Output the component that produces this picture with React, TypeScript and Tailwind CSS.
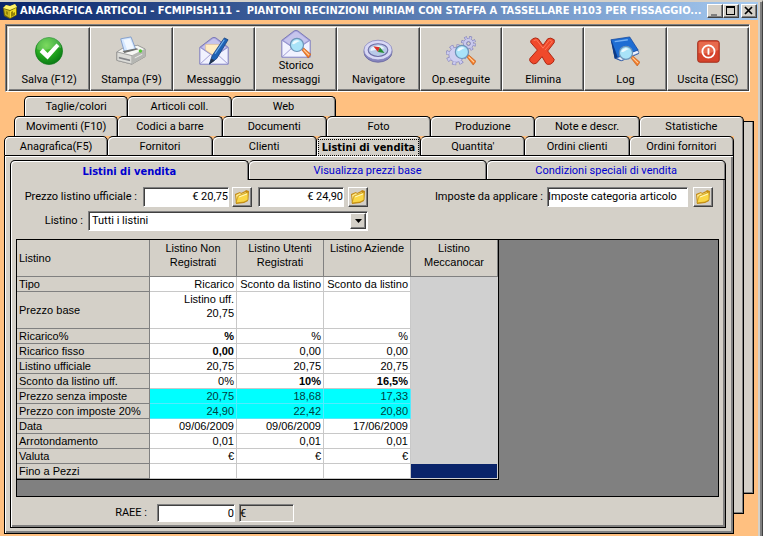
import React from 'react';

type IconProps = { className?: string };

const CubeIcon: React.FC<IconProps> = ({ className }) => (
    <svg viewBox="0 0 16 16" className={className} aria-hidden="true">
        <path d="M1 5 4 2l4 1 5-2 2 3v8l-7 4-6-3z" fill="#6f6408" />
        <path d="m1 5 7 2 7-3-2-3-5 2-4-1z" fill="#fff36a" />
        <path d="m2 6 6 2v7l-5-3z" fill="#c6b31c" />
        <path d="m8 8 6-3v7l-6 3z" fill="#f2de24" />
        <path d="m4 8 2 1v3l-2-1zM9 9l2-1v2l2-1v3l-4 2z" fill="#938407" />
    </svg>
);

const CheckIcon: React.FC<IconProps> = ({ className }) => (
    <svg viewBox="0 0 32 32" className={className} aria-hidden="true">
        <defs>
            <radialGradient id="checkFill" cx="40%" cy="30%" r="75%">
                <stop offset="0" stopColor="#5fd23c" />
                <stop offset="0.6" stopColor="#1fa01d" />
                <stop offset="1" stopColor="#087414" />
            </radialGradient>
        </defs>
        <circle cx="16" cy="16" r="14.500" fill="url(#checkFill)" stroke="#0c7a17" strokeWidth="0.7" />
        <path d="M3 14a13 13 0 0 1 26-1C22 10 12 18 3 14z" fill="#fff" opacity="0.18" />
        <path d="m6 17 3.500-4 5 5 9.500-10 3 3-12.500 14z" fill="#fff" />
    </svg>
);

const PrinterIcon: React.FC<IconProps> = ({ className }) => (
    <svg viewBox="0 0 32 32" className={className} aria-hidden="true">
        <path d="m1 17 8-5 14-2 8 4v8l-14 8-16-4z" fill="#c3c4c0" stroke="#777" strokeWidth="0.8" />
        <path d="m1 17 8-5 14-2 8 4-14 7z" fill="#f7f7f4" stroke="#999" strokeWidth="0.6" />
        <path d="m1 17 16 4v9L1 26z" fill="#dcdcd8" stroke="#888" strokeWidth="0.6" />
        <path d="m17 21 14-7v8l-14 8z" fill="#b5b6b2" />
        <path d="M5 3 16 1l5 13-12 3z" fill="#d4e7ff" stroke="#6f8fc4" strokeWidth="0.8" />
        <path d="m8 4 7-1 4 10-7 2z" fill="#f2f8ff" />
        <path d="m7 16 15-3 2 1-15 4z" fill="#6f706e" />
        <path d="m3 22 12 3v2L3 24z" fill="#85868a" />
        <circle cx="26" cy="16" r="1.800" fill="#54c936" />
        <path d="m20 23 8-4v1l-8 4z" fill="#e9e9e7" />
    </svg>
);

const EnvelopeShape = () => (
    <g>
        <path d="M1 12 14 2q2-1 4 0l13 10v18H1z" fill="#a5a2dd" stroke="#7775b4" strokeWidth="1" />
        <path d="m3 12 12-9h2l12 9-13 9z" fill="#c6c4ec" />
        <path d="M1 12 16 22 31 12v18H1z" fill="#f1f2ff" stroke="#8a88c6" strokeWidth="0.9" />
        <path d="m1 30 12-11M31 30 19 19" stroke="#9c9ad2" strokeWidth="1" fill="none" />
    </g>
);

const LensShape = () => (
    <g>
        <path d="m22 22 2-2 8 7-3 4z" fill="#f47b28" stroke="#b85412" strokeWidth="0.6" />
        <path d="m24 22 6 6" stroke="#ffd2a0" strokeWidth="1.200" />
        <circle cx="17" cy="17" r="7" fill="#a9e3f8" stroke="#6d94b8" strokeWidth="1.300" />
        <path d="M12 16a5 5 0 0 1 8-3c-3 0-5 4-8 3z" fill="#fff" opacity="0.8" />
    </g>
);

const MessageIcon: React.FC<IconProps> = ({ className }) => (
    <svg viewBox="0 0 32 32" className={className} aria-hidden="true">
        <EnvelopeShape />
        <path d="M7 9h17v7l-8 5-9-6z" fill="#ffecc3" stroke="#e0bd83" strokeWidth="0.6" />
        <path d="m11 30 3-9L27 2l4 2-12 20z" fill="#1d62b5" stroke="#123d7c" strokeWidth="0.8" />
        <path d="m17 19 10-15" stroke="#79b4ee" strokeWidth="1.200" />
        <path d="m11 30 2-6 4 2z" fill="#26344c" />
    </svg>
);

const HistoryIcon: React.FC<IconProps> = ({ className }) => (
    <svg viewBox="0 0 32 32" className={className} aria-hidden="true">
        <EnvelopeShape />
        <LensShape />
    </svg>
);

const CompassIcon: React.FC<IconProps> = ({ className }) => (
    <svg viewBox="0 0 32 32" className={className} aria-hidden="true">
        <ellipse cx="16" cy="17" rx="15" ry="11" fill="#8584bd" stroke="#65649d" strokeWidth="0.8" />
        <ellipse cx="16" cy="15" rx="15" ry="10.500" fill="#d8d8f5" stroke="#8483bb" strokeWidth="0.8" />
        <ellipse cx="16" cy="15" rx="10.500" ry="6.800" fill="#b8c9e8" stroke="#6c6ba4" strokeWidth="1.200" />
        <path d="M8 16a8 5 0 0 1 15-3z" fill="#eaf4fd" />
        <path d="m11 11 7 1-2 5z" fill="#dd3228" />
        <path d="m23 18-5-6-2 5z" fill="#248b34" />
    </svg>
);

const GearsIcon: React.FC<IconProps> = ({ className }) => (
    <svg viewBox="0 0 32 32" className={className} aria-hidden="true">
        <circle cx="24" cy="8" r="6" fill="none" stroke="#8281bb" strokeWidth="4" strokeDasharray="2.600 2.110" />
        <circle cx="24" cy="8" r="5.500" fill="#c9c9ec" stroke="#8584be" strokeWidth="0.8" />
        <circle cx="24" cy="8" r="6" fill="none" stroke="#c4c4ea" strokeWidth="2.800" strokeDasharray="1.600 3.110" strokeDashoffset="-0.500" />
        <circle cx="24" cy="8" r="2" fill="#d4d0c8" stroke="#6f6eaa" strokeWidth="0.9" />
        <circle cx="11" cy="20" r="9" fill="none" stroke="#8281bb" strokeWidth="4.400" strokeDasharray="4 3.070" />
        <circle cx="11" cy="20" r="8" fill="#cfcff0" stroke="#8584be" strokeWidth="0.8" />
        <circle cx="11" cy="20" r="9" fill="none" stroke="#cbcbee" strokeWidth="3.200" strokeDasharray="2.800 4.270" strokeDashoffset="-0.600" />
        <LensShape />
    </svg>
);

const DeleteIcon: React.FC<IconProps> = ({ className }) => (
    <svg viewBox="0 0 32 32" className={className} aria-hidden="true">
        <path
            d="M5 3q3-2 6 0l5 7 5-7q3-2 7 1v3l-7 9 7 9q0 3-4 5-4 1-5-1l-4-7-6 7q-3 2-6-1-2-2-1-4l8-9-7-8q-1-2 2-4z"
            fill="#f0492b"
            stroke="#aa2410"
            strokeWidth="1"
        />
        <path d="m6 5 3-1 7 9 7-9 3 2-8 9" fill="none" stroke="#ff7a5c" strokeWidth="1" />
    </svg>
);

const LogIcon: React.FC<IconProps> = ({ className }) => (
    <svg viewBox="0 0 32 32" className={className} aria-hidden="true">
        <path d="m1 5 4 19 7 3 19-8-1-4z" fill="#12459c" />
        <path d="m6 23 23-8 2 3-19 8z" fill="#eff4ff" stroke="#5975ae" strokeWidth="0.6" />
        <path d="M1 4 21 1l9 14-22 8z" fill="#1e6dd3" stroke="#12459c" strokeWidth="0.8" />
        <path d="m5 6 14-2" stroke="#76b1f4" strokeWidth="1.500" />
        <path d="m1 4 7 19-3 1z" fill="#0d3a85" />
        <g transform="translate(0 1)">
            <LensShape />
        </g>
    </svg>
);

const ExitIcon: React.FC<IconProps> = ({ className }) => (
    <svg viewBox="0 0 32 32" className={className} aria-hidden="true">
        <rect x="5" y="5" width="23" height="23" rx="2.500" fill="#d6432b" stroke="#a02a18" />
        <path d="M6 7q0-1 2-1h17q2 0 2 1v8q-10 5-21 3z" fill="#ee7a5d" opacity="0.7" />
        <circle cx="16.500" cy="16.500" r="6.500" fill="none" stroke="#fff" strokeWidth="1.900" />
        <path d="M16.500 13v7" stroke="#fff" strokeWidth="2" />
    </svg>
);

const FolderIcon: React.FC<IconProps> = ({ className }) => (
    <svg viewBox="0 0 16 16" className={className} aria-hidden="true">
        <path d="m1 5 5-2 1 1 4-2 1-1 3 1-1 10-4 2-8 1z" fill="#c48a14" />
        <path d="m2 6 4-2 1 1 5-2v8l-9 2z" fill="#ffe98a" />
        <path d="m4 7 10-4v8l-4 2-8 1z" fill="#fbd746" stroke="#b8860b" strokeWidth="0.6" />
        <path d="m5 8 8-3" stroke="#fff9c8" strokeWidth="1" />
    </svg>
);

const toolbar = [
    { label: 'Salva (F12)', Icon: CheckIcon },
    { label: 'Stampa (F9)', Icon: PrinterIcon },
    { label: 'Messaggio', Icon: MessageIcon },
    { label: 'Storico messaggi', Icon: HistoryIcon },
    { label: 'Navigatore', Icon: CompassIcon },
    { label: 'Op.eseguite', Icon: GearsIcon },
    { label: 'Elimina', Icon: DeleteIcon },
    { label: 'Log', Icon: LogIcon },
    { label: 'Uscita (ESC)', Icon: ExitIcon },
];

const backTabs = ['Taglie/colori', 'Articoli coll.', 'Web'];
const middleTabs = ['Movimenti (F10)', 'Codici a barre', 'Documenti', 'Foto', 'Produzione', 'Note e descr.', 'Statistiche'];
const frontTabs = ['Anagrafica(F5)', 'Fornitori', 'Clienti', 'Listini di vendita', "Quantita'", 'Ordini clienti', 'Ordini fornitori'];
const innerTabs = ['Listini di vendita', 'Visualizza prezzi base', 'Condizioni speciali di vendita'];

const columns = ['Listino Non Registrati', 'Listino Utenti Registrati', 'Listino Aziende', 'Listino Meccanocar'];

type Row = { label: string; values: string[]; bold?: number[]; cyan?: boolean; tall?: boolean };

const rows: Row[] = [
    { label: 'Tipo', values: ['Ricarico', 'Sconto da listino', 'Sconto da listino'] },
    { label: 'Prezzo base', values: ['Listino uff. 20,75', '', ''], tall: true },
    { label: 'Ricarico%', values: ['%', '%', '%'], bold: [0] },
    { label: 'Ricarico fisso', values: ['0,00', '0,00', '0,00'], bold: [0] },
    { label: 'Listino ufficiale', values: ['20,75', '20,75', '20,75'] },
    { label: 'Sconto da listino uff.', values: ['0%', '10%', '16,5%'], bold: [1, 2] },
    { label: 'Prezzo senza imposte', values: ['20,75', '18,68', '17,33'], cyan: true },
    { label: 'Prezzo con imposte 20%', values: ['24,90', '22,42', '20,80'], cyan: true },
    { label: 'Data', values: ['09/06/2009', '09/06/2009', '17/06/2009'] },
    { label: 'Arrotondamento', values: ['0,01', '0,01', '0,01'] },
    { label: 'Valuta', values: ['€', '€', '€'] },
    { label: 'Fino a Pezzi', values: ['', '', ''] },
];

const raised = 'border border-t-white border-l-white border-r-[#404040] border-b-[#404040] shadow-[inset_-1px_-1px_0_#808080]';
const sunken = 'border border-t-[#808080] border-l-[#808080] border-r-white border-b-white shadow-[inset_1px_1px_0_#404040]';
const tabShape = 'h-5 min-w-0 rounded-t-[5px] border-t border-r border-black whitespace-nowrap';
const tabShade = 'shadow-[inset_1px_1px_0_#fff,inset_-1px_0_0_#808080]';

const TabButton: React.FC<{ label: string; first?: boolean; className?: string }> = ({ label, first, className = '' }) => (
    <button role="tab" className={`${tabShape} ${tabShade} ${first ? 'border-l' : ''} ${className}`}>
        {label}
    </button>
);

const FolderButton: React.FC<{ label: string }> = ({ label }) => (
    <button aria-label={label} className={`flex h-5 w-5 shrink-0 items-center justify-center bg-[#d4d0c8] ${raised}`}>
        <FolderIcon className="h-4 w-4" />
    </button>
);

const TitleBar = () => (
    <header className="flex h-[18px] items-center gap-[2px] bg-linear-to-r from-[#0a246a] to-[#a6caf0] pr-px pl-[2px]">
        <CubeIcon className="h-4 w-4 shrink-0" />
        <h1 className="min-w-0 flex-1 font-['DejaVu_Sans_Condensed','DejaVu_Sans',sans-serif] text-[11px] font-bold whitespace-pre text-white">
            ANAGRAFICA ARTICOLI - FCMIPISH111 -  PIANTONI RECINZIONI MIRIAM CON STAFFA A TASSELLARE H103 PER FISSAGGIO...
        </h1>
        <div className="flex">
            <button aria-label="Riduci a icona" className={`flex h-[14px] w-4 items-center justify-center bg-[#d4d0c8] ${raised}`}>
                <svg viewBox="0 0 10 10" className="h-[10px] w-[10px]"><path d="M1 8h6v2H1z" fill="#808080" /></svg>
            </button>
            <button aria-label="Ingrandisci" className={`flex h-[14px] w-4 items-center justify-center bg-[#d4d0c8] ${raised}`}>
                <svg viewBox="0 0 10 10" className="h-[10px] w-[10px]"><path d="M0 0h9v9H0zM1 2v6h7V2z" fillRule="evenodd" /></svg>
            </button>
            <button aria-label="Chiudi" className={`ml-[2px] flex h-[14px] w-4 items-center justify-center bg-[#d4d0c8] ${raised}`}>
                <svg viewBox="0 0 10 10" className="h-[10px] w-[10px]"><path d="m1 1 7 7M8 1 1 8" stroke="#000" strokeWidth="1.700" /></svg>
            </button>
        </div>
    </header>
);

const Toolbar = () => (
    <div role="toolbar" className={`mr-2 ml-[5px] flex bg-[#d4d0c8] pt-[2px] pl-[2px] ${sunken}`}>
        {toolbar.map(({ label, Icon }) => (
            <button
                key={label}
                className={`flex h-16 min-w-0 flex-1 flex-col items-center justify-end px-3 pb-[3px] leading-[14px] ${raised}`}
            >
                <Icon className={label === 'Storico messaggi' ? 'h-[30px] w-[30px] shrink-0' : 'mb-[7px] h-[30px] w-[30px] shrink-0'} />
                <span className={label === 'Storico messaggi' ? '' : 'whitespace-nowrap'}>{label}</span>
            </button>
        ))}
    </div>
);

const PriceTable = () => (
    <table className="w-[482px] table-fixed border-separate border-spacing-0 border-r border-b border-black bg-[#d0d0d0] font-['Liberation_Sans',Arial,sans-serif] text-[11px] leading-[14px]">
        <colgroup>
            <col className="w-[133px]" />
            <col />
            <col />
            <col />
            <col />
        </colgroup>
        <thead>
            <tr className="h-[37px] bg-[#d4d0c8]">
                <th className="border-r border-b border-[#808080] pl-[2px] text-left font-normal">Listino</th>
                {columns.map((c) => (
                    <th key={c} className="border-r border-b border-[#808080] px-1 pt-px align-top font-normal">{c}</th>
                ))}
            </tr>
        </thead>
        <tbody>
            {rows.map((row) => (
                <tr key={row.label} className={row.tall ? 'h-[37px]' : 'h-[15px]'}>
                    <th className="border-r border-b border-[#808080] bg-[#d4d0c8] p-0 pl-[2px] text-left font-normal whitespace-nowrap">
                        {row.label}
                    </th>
                    {row.values.map((v, i) => (
                        <td
                            key={i}
                            className={`border-r border-b p-0 pr-[2px] text-right align-top ${
                                row.cyan ? 'border-cyan-300 bg-[#00ffff] text-[#004040]' : 'border-[#c8c8c8] bg-white'
                            } ${row.bold?.includes(i) ? 'font-bold' : ''} ${row.tall ? 'pl-6' : 'whitespace-nowrap'}`}
                        >
                            {v}
                        </td>
                    ))}
                    <td className={row.label === 'Fino a Pezzi' ? 'border-r border-b border-[#d0d0d0] bg-[#0a246a] bg-clip-padding p-0' : 'p-0'} />
                </tr>
            ))}
        </tbody>
    </table>
);

const PriceForm = () => (
    <div className="flex flex-col pt-[7px] pr-[6px] pb-[5px] pl-[5px]">
        <div className="flex items-center pr-[6px]">
            <label htmlFor="prezzo" className="mr-[6px] w-[121px] text-right whitespace-nowrap">Prezzo listino ufficiale :</label>
            <input id="prezzo" defaultValue="€ 20,75" className={`mr-[3px] h-5 w-[86px] bg-white pb-[2px] text-right ${sunken}`} />
            <FolderButton label="Cerca prezzo" />
            <input aria-label="Prezzo con imposte" defaultValue="€ 24,90" className={`mr-1 ml-[6px] h-5 w-[86px] bg-white pb-[2px] text-right ${sunken}`} />
            <FolderButton label="Cerca prezzo con imposte" />
            <label htmlFor="imposte" className="mr-1 ml-auto whitespace-nowrap">Imposte da applicare :</label>
            <input id="imposte" defaultValue="Imposte categoria articolo" className={`mr-[5px] h-5 w-[141px] bg-white pb-[2px] ${sunken}`} />
            <FolderButton label="Cerca imposte" />
        </div>

        <div className="mt-1 flex items-center">
            <label htmlFor="listino" className="mr-[5px] w-[67px] text-right">Listino :</label>
            <div className="relative">
                <select id="listino" className={`block h-5 w-[280px] appearance-none bg-white pl-[3px] ${sunken}`}>
                    <option>Tutti i listini</option>
                </select>
                <span className={`pointer-events-none absolute top-[2px] right-[2px] flex h-4 w-4 items-center justify-center bg-[#d4d0c8] ${raised}`}>
                    <svg viewBox="0 0 7 4" className="h-1 w-[7px]"><path d="M0 0h7L3.500 4z" /></svg>
                </span>
            </div>
        </div>

        <div className="mt-2 border border-black bg-[#808080] pb-4">
            <PriceTable />
        </div>

        <div className="mt-[7px] flex items-center">
            <label htmlFor="raee" className="mr-[10px] w-[131px] text-right">RAEE :</label>
            <input id="raee" defaultValue="0" className={`mr-1 h-[18px] w-[78px] bg-white text-right ${sunken}`} />
            <input aria-label="Valuta RAEE" readOnly defaultValue="€" className={`h-[18px] w-[55px] bg-[#d4d0c8] ${sunken}`} />
        </div>
    </div>
);

const FrontPage = () => (
    <div className="col-start-1 row-start-3">
        <div role="tablist" className="grid grid-cols-7">
            {frontTabs.map((label, i) =>
                label === 'Listini di vendita' ? (
                    <button
                        key={label}
                        role="tab"
                        aria-selected="true"
                        className={`${tabShape} ${tabShade} bg-[#d4d0c8] px-px pt-px font-['DejaVu_Sans_Condensed','DejaVu_Sans',sans-serif] font-bold`}
                    >
                        <span className="block border border-dotted border-black leading-[15px]">{label}</span>
                    </button>
                ) : (
                    <TabButton key={label} label={label} first={i === 0} className="border-b bg-[#d4d0c8] pt-px" />
                )
            )}
        </div>

        <div className="border-r border-b border-l border-black bg-[#d4d0c8] pt-1 pr-[7px] pb-[5px] pl-[5px] shadow-[inset_1px_1px_0_#fff,inset_-2px_-2px_0_#808080]">
            <div role="tablist" className="grid grid-cols-3 text-[#0000d0]">
                {innerTabs.map((label, i) =>
                    i === 0 ? (
                        <button
                            key={label}
                            role="tab"
                            aria-selected="true"
                            className={`${tabShape} ${tabShade} border-l pt-[3px] font-['DejaVu_Sans_Condensed','DejaVu_Sans',sans-serif] font-bold`}
                        >
                            {label}
                        </button>
                    ) : (
                        <TabButton key={label} label={label} className="border-b pt-px" />
                    )
                )}
            </div>
            <div className="border-r border-b border-l border-black shadow-[inset_1px_0_0_#fff,inset_-2px_-2px_0_#808080]">
                <PriceForm />
            </div>
        </div>
    </div>
);

const App: React.FC = () => (
    <div className="flex min-h-screen flex-col border-t-2 border-r border-t-[#d4d0c8] border-r-[#404040] bg-[#ffc080] font-[Roboto,'Liberation_Sans',sans-serif] text-[11px] leading-[14px] text-black">
        <div className="flex flex-1 flex-col border-r-2 border-[#808080]">
            <div className="flex flex-1 flex-col border-r-2 border-[#d4d0c8]">
                <TitleBar />
                <div className="mt-1">
                    <Toolbar />
                </div>

                <main className="mt-1 mr-1 ml-1 grid grid-cols-[minmax(0,1fr)_10px_10px]">
                    <div role="tablist" className="col-start-1 row-start-1 mr-[398px] ml-5 grid grid-cols-3">
                        {backTabs.map((label, i) => (
                            <TabButton key={label} label={label} first={i === 0} className="bg-[#d4d0c8]" />
                        ))}
                    </div>
                    <div role="tablist" className="col-span-2 col-start-1 row-start-2 ml-[10px] grid grid-cols-7">
                        {middleTabs.map((label, i) => (
                            <TabButton key={label} label={label} first={i === 0} className="bg-[#d4d0c8]" />
                        ))}
                    </div>
                    <FrontPage />
                    <div className="col-start-2 row-start-3 mb-5 border-r border-b border-black bg-[#d4d0c8] shadow-[inset_-1px_-1px_0_#808080]" />
                    <div className="col-start-3 row-span-2 row-start-2 mt-[5px] mb-10 border-t border-r border-b border-black bg-[#d4d0c8] shadow-[inset_-1px_-1px_0_#808080]" />
                </main>
            </div>
        </div>
    </div>
);

export default App;
